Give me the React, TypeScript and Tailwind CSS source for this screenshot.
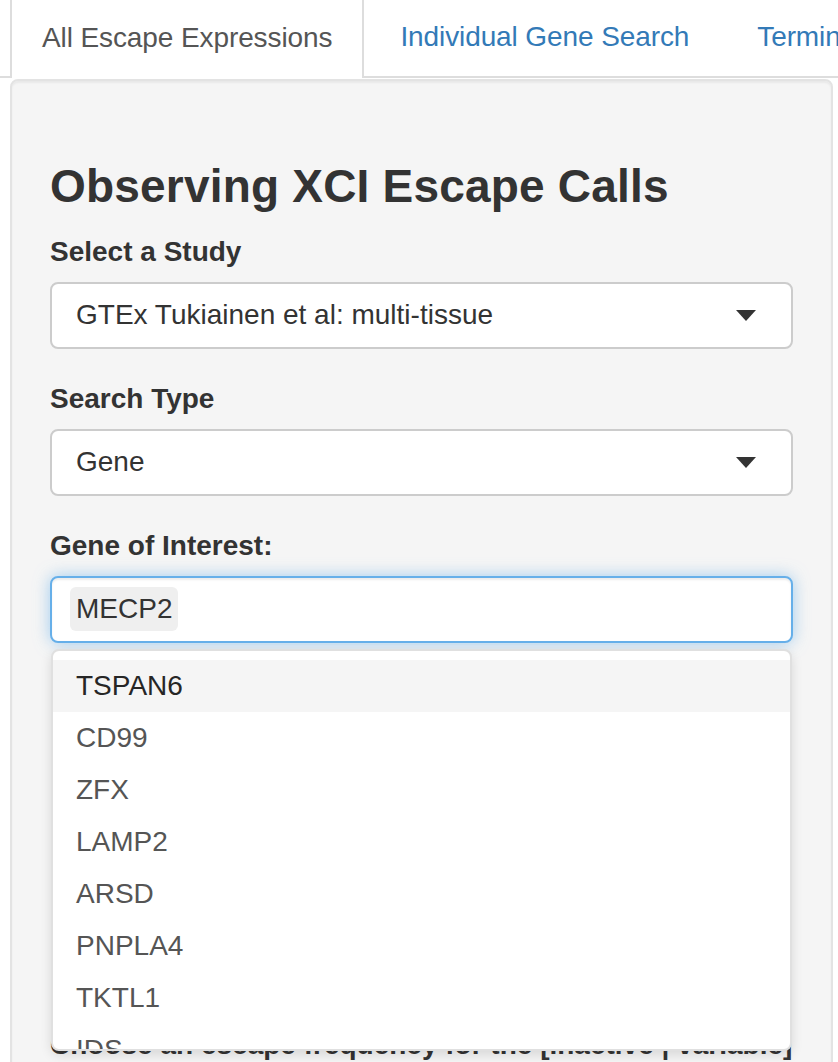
import React from "react";

const GENES = ["TSPAN6", "CD99", "ZFX", "LAMP2", "ARSD", "PNPLA4", "TKTL1", "IDS"];

function Caret() {
  return (
    <svg width="20" height="11" viewBox="0 0 20 11" className="shrink-0">
      <path d="M0 0 L20 0 L10 11 Z" fill="#333" />
    </svg>
  );
}

function SelectBox({ value }: { value: string }) {
  return (
    <div className="flex h-[67px] items-center justify-between rounded-[8px] border-2 border-[#ccc] bg-white pl-[24px] pr-[35px] text-[28px] text-[#333]">
      <span>{value}</span>
      <Caret />
    </div>
  );
}

export default function App() {
  return (
    <div className="relative h-[1062px] w-[838px] overflow-hidden bg-white font-['Liberation_Sans',Arial,sans-serif] text-[#333]">
      {/* tabs */}
      <div className="flex h-[78px] border-b-2 border-[#ddd]">
        <div className="-mb-[2px] ml-[10px] flex h-[78px] shrink-0 items-center whitespace-nowrap border-x-2 border-[#ddd] bg-white px-[30px] pb-[3px] text-[28px] tracking-[-0.1px] text-[#555]">
          All Escape Expressions
        </div>
        <div className="ml-[4px] flex shrink-0 items-center whitespace-nowrap border-x-2 border-transparent px-[30px] pb-[3px] text-[28px] tracking-[-0.1px] text-[#337ab7]">
          Individual Gene Search
        </div>
        <div className="ml-[4px] flex shrink-0 items-center whitespace-nowrap border-x-2 border-transparent px-[30px] pb-[3px] text-[28px] tracking-[-0.1px] text-[#337ab7]">
          Terminology
        </div>
      </div>

      {/* well */}
      <div className="ml-[10px] mr-[5px] mt-[1px] h-[1100px] rounded-[8px] border-2 border-[#e3e3e3] bg-[#f5f5f5] px-[38px] pt-[40px] shadow-[inset_0_2px_2px_rgba(0,0,0,0.05)]">
        <h3 className="mt-[40px] mb-[20px] text-[46px] font-bold leading-[1.1] tracking-[0.2px] text-[#333]">
          Observing XCI Escape Calls
        </h3>

        <div className="mb-[30px]">
          <label className="mb-[10px] block text-[28px] font-bold leading-[40px]">Select a Study</label>
          <SelectBox value="GTEx Tukiainen et al: multi-tissue" />
        </div>

        <div className="mb-[30px]">
          <label className="mb-[10px] block text-[28px] font-bold leading-[40px]">Search Type</label>
          <SelectBox value="Gene" />
        </div>

        <div>
          <label className="mb-[10px] block text-[28px] font-bold leading-[40px]">Gene of Interest:</label>
          <div className="relative">
            <div className="flex h-[67px] items-center rounded-[8px] border-2 border-[#66afe9] bg-white pl-[18px] shadow-[inset_0_2px_2px_rgba(0,0,0,0.075),0_0_16px_rgba(102,175,233,0.6)]">
              <span className="flex h-[44px] items-center rounded-[6px] bg-[#efefef] px-[6px] text-[28px] text-[#333]">
                MECP2
              </span>
            </div>

            {/* dropdown menu */}
            <div className="absolute left-[1px] right-[1px] top-[73px] z-10 h-[402px] overflow-hidden rounded-[8px] border-2 border-[#e0e0e0] bg-white pt-[9px] shadow-[0_4px_12px_rgba(0,0,0,0.12)]">
              {GENES.map((g, i) => (
                <div
                  key={g}
                  className={`flex h-[52px] items-center pl-[23px] text-[28px] ${
                    i === 0 ? "bg-[#f5f5f5] text-[#262626]" : "text-[#555]"
                  }`}
                >
                  {g}
                </div>
              ))}
            </div>
          </div>
        </div>

        <div className="mt-[382px]">
          <label className="block whitespace-nowrap text-[28px] font-bold leading-[40px]">
            Choose an escape frequency for the [inactive | variable]
          </label>
        </div>
      </div>
    </div>
  );
}
